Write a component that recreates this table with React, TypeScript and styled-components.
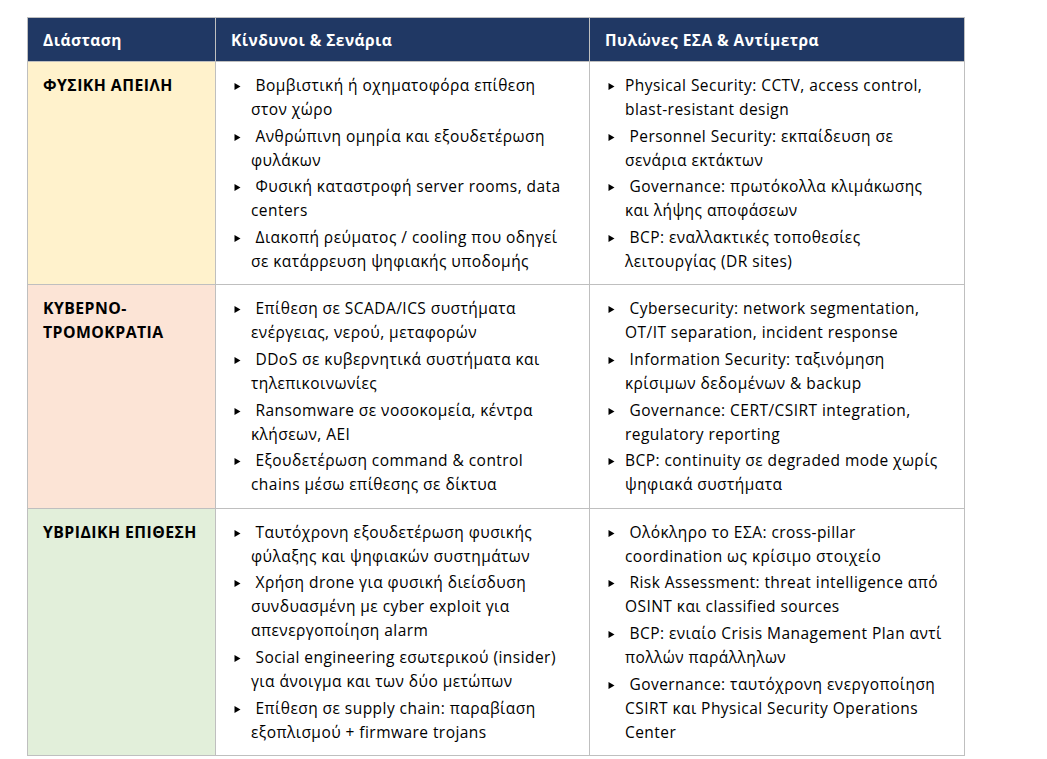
import React from "react";
import styled, { createGlobalStyle } from "styled-components";

const Global = createGlobalStyle`
  html, body { margin: 0; padding: 0; background: #ffffff; }
  body { font-family: "Open Sans", "Noto Sans", sans-serif; color: #000; }
`;

const Page = styled.div`
  padding: 17px 0 0 27px;
`;

const Table = styled.table`
  border-collapse: collapse;
  table-layout: fixed;
  width: 937px;
`;

const HeadCell = styled.th<{ $w: number }>`
  width: ${(p) => p.$w}px;
  height: 44px;
  box-sizing: border-box;
  background: #203864;
  color: #ffffff;
  font-weight: 700;
  font-size: 15.5px;
  letter-spacing: 0.45px;
  text-align: left;
  padding: 1px 15px 0 15px;
  border: 1px solid #bfbfbf;
  vertical-align: middle;
`;

const tones: Record<string, string> = {
  yellow: "#fff2cc",
  peach: "#fce4d6",
  green: "#e2efda",
};

const DimCell = styled.td<{ $tone: string }>`
  background: ${(p) => tones[p.$tone]};
  border: 1px solid #bfbfbf;
  vertical-align: top;
  padding: 11px 10px 11px 15px;
  font-weight: 700;
  font-size: 15.8px;
  letter-spacing: 0.45px;
  line-height: 24px;
`;

const Cell = styled.td`
  background: #ffffff;
  border: 1px solid #bfbfbf;
  vertical-align: top;
  padding: 11px 6px 11.4px 35px;
  font-size: 15.5px;
  letter-spacing: 0.45px;
  line-height: 24px;
`;

const List = styled.ul`
  list-style: none;
  margin: 0;
  padding: 0;
  display: flex;
  flex-direction: column;
  gap: 2.67px;
`;

const Item = styled.li`
  text-indent: -17px;
  white-space: pre;
`;

const Marker = styled.span`
  display: inline-block;
  width: 17px;
  text-indent: 0;
  letter-spacing: 0;
  vertical-align: baseline;
  svg { display: inline-block; margin-left: 0; vertical-align: 0; }
`;

const Bullet = () => (
  <Marker>
    <svg width="7" height="9" viewBox="0 0 7 9">
      <path d="M0.5 1 L6.5 4.5 L0.5 8 Z" fill="#000" />
    </svg>
  </Marker>
);

type Row = {
  tone: string;
  title: string[];
  risks: string[][];
  pillars: string[][];
};

const rows: Row[] = [
  {
    tone: "yellow",
    title: ["ΦΥΣΙΚΗ ΑΠΕΙΛΗ"],
    risks: [
      [" Βομβιστική ή οχηματοφόρα επίθεση", "στον χώρο"],
      [" Ανθρώπινη ομηρία και εξουδετέρωση", "φυλάκων"],
      [" Φυσική καταστροφή server rooms, data", "centers"],
      [" Διακοπή ρεύματος / cooling που οδηγεί", "σε κατάρρευση ψηφιακής υποδομής"],
    ],
    pillars: [
      ["Physical Security: CCTV, access control,", "blast-resistant design"],
      [" Personnel Security: εκπαίδευση σε", "σενάρια εκτάκτων"],
      [" Governance: πρωτόκολλα κλιμάκωσης", "και λήψης αποφάσεων"],
      [" BCP: εναλλακτικές τοποθεσίες", "λειτουργίας (DR sites)"],
    ],
  },
  {
    tone: "peach",
    title: ["ΚΥΒΕΡΝΟ-", "ΤΡΟΜΟΚΡΑΤΙΑ"],
    risks: [
      [" Επίθεση σε SCADA/ICS συστήματα", "ενέργειας, νερού, μεταφορών"],
      [" DDoS σε κυβερνητικά συστήματα και", "τηλεπικοινωνίες"],
      [" Ransomware σε νοσοκομεία, κέντρα", "κλήσεων, ΑΕΙ"],
      [" Εξουδετέρωση command & control", "chains μέσω επίθεσης σε δίκτυα"],
    ],
    pillars: [
      [" Cybersecurity: network segmentation,", "OT/IT separation, incident response"],
      [" Information Security: ταξινόμηση", "κρίσιμων δεδομένων & backup"],
      [" Governance: CERT/CSIRT integration,", "regulatory reporting"],
      ["BCP: continuity σε degraded mode χωρίς", "ψηφιακά συστήματα"],
    ],
  },
  {
    tone: "green",
    title: ["ΥΒΡΙΔΙΚΗ ΕΠΙΘΕΣΗ"],
    risks: [
      [" Ταυτόχρονη εξουδετέρωση φυσικής", "φύλαξης και ψηφιακών συστημάτων"],
      [" Χρήση drone για φυσική διείσδυση", "συνδυασμένη με cyber exploit για", "απενεργοποίηση alarm"],
      [" Social engineering εσωτερικού (insider)", "για άνοιγμα και των δύο μετώπων"],
      [" Επίθεση σε supply chain: παραβίαση", "εξοπλισμού + firmware trojans"],
    ],
    pillars: [
      [" Ολόκληρο το ΕΣΑ: cross-pillar", "coordination ως κρίσιμο στοιχείο"],
      [" Risk Assessment: threat intelligence από", "OSINT και classified sources"],
      [" BCP: ενιαίο Crisis Management Plan αντί", "πολλών παράλληλων"],
      [" Governance: ταυτόχρονη ενεργοποίηση", "CSIRT και Physical Security Operations", "Center"],
    ],
  },
];

const Lines = ({ lines }: { lines: string[] }) => (
  <>
    {lines.map((l, i) => (
      <React.Fragment key={i}>
        {i > 0 && <br />}
        {l}
      </React.Fragment>
    ))}
  </>
);

const BulletList = ({ items }: { items: string[][] }) => (
  <List>
    {items.map((lines, i) => (
      <Item key={i}>
        <Bullet />
        <Lines lines={lines} />
      </Item>
    ))}
  </List>
);

export default function App() {
  return (
    <Page>
      <Global />
      <Table>
        <thead>
          <tr>
            <HeadCell $w={188}>Διάσταση</HeadCell>
            <HeadCell $w={374}>Κίνδυνοι &amp; Σενάρια</HeadCell>
            <HeadCell $w={375}>Πυλώνες ΕΣΑ &amp; Αντίμετρα</HeadCell>
          </tr>
        </thead>
        <tbody>
          {rows.map((r, i) => (
            <tr key={i}>
              <DimCell $tone={r.tone}>
                <Lines lines={r.title} />
              </DimCell>
              <Cell>
                <BulletList items={r.risks} />
              </Cell>
              <Cell>
                <BulletList items={r.pillars} />
              </Cell>
            </tr>
          ))}
        </tbody>
      </Table>
    </Page>
  );
}
